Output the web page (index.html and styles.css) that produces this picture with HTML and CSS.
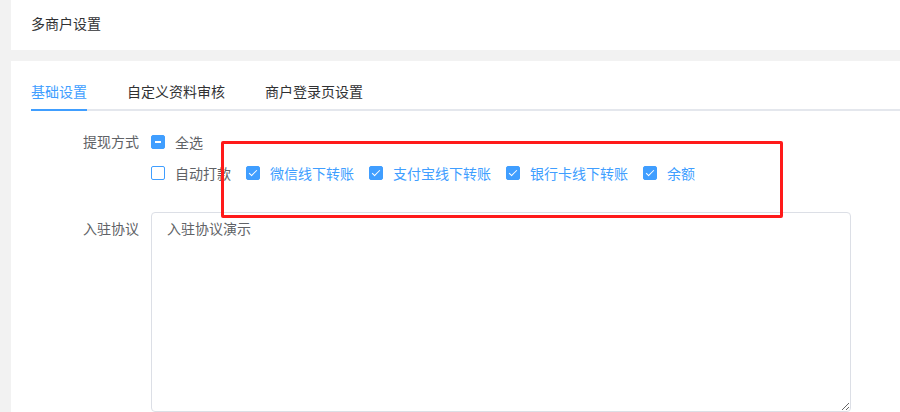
FILE: index.html
```html
<!DOCTYPE html>
<html>
<head>
	<meta charset="utf-8">
	<title>多商户设置</title>
	<link rel="stylesheet" href="styles.css">
</head>
<body>
<div class="page">
	<div class="head-card">
		<div class="head-title">多商户设置</div>
	</div>
	<div class="main-card">
		<div class="tabs">
			<div class="tab active">基础设置</div>
			<div class="tab">自定义资料审核</div>
			<div class="tab">商户登录页设置</div>
		</div>
		<form class="form">
			<div class="form-item">
				<label class="form-label">提现方式</label>
				<div class="form-content">
					<div class="check-row">
						<label class="check"><span class="box indeterminate"></span><span class="check-text">全选</span></label>
					</div>
					<div class="check-row">
						<label class="check"><span class="box"></span><span class="check-text">自动打款</span></label>
						<label class="check checked"><span class="box"></span><span class="check-text">微信线下转账</span></label>
						<label class="check checked"><span class="box"></span><span class="check-text">支付宝线下转账</span></label>
						<label class="check checked"><span class="box"></span><span class="check-text">银行卡线下转账</span></label>
						<label class="check checked"><span class="box"></span><span class="check-text">余额</span></label>
					</div>
				</div>
			</div>
			<div class="form-item">
				<label class="form-label">入驻协议</label>
				<div class="form-content">
					<textarea class="textarea">入驻协议演示</textarea>
				</div>
			</div>
		</form>
	</div>
</div>
<div class="mark"></div>
</body>
</html>
```

FILE: styles.css
```css
* { box-sizing: border-box; }
body { margin: 0; background: #f2f2f2; font-family: "Noto Sans CJK SC", "Microsoft YaHei", sans-serif; font-size: 14px; color: #303133; overflow: hidden; }
.page { padding-left: 11px; height: 412px; overflow: hidden; }
.head-card { background: #fff; height: 50px; padding: 14px 20px 0; }
.head-title { line-height: 18px; color: #303133; }
.main-card { background: #fff; margin-top: 11px; padding-left: 20px; height: 351px; }
.tabs { display: flex; gap: 40px; padding-top: 12px; border-bottom: 2px solid #e4e7ed; }
.tab { height: 36px; line-height: 36px; color: #303133; }
.tab.active { color: #409eff; border-bottom: 2px solid #409eff; height: 38px; margin-bottom: -2px; }
.form { padding-top: 15px; }
.form-item { display: flex; margin-bottom: 24px; }
.form-label { width: 120px; padding-right: 12px; text-align: right; color: #606266; line-height: 31px; flex-shrink: 0; }
.form-item + .form-item .form-label { line-height: 32px; }
.check-row { display: flex; height: 31px; align-items: center; }
.check { display: flex; align-items: center; margin-right: 15px; color: #606266; }
.check-text { padding-left: 10px; line-height: 20px; }
.check.checked .check-text { color: #409eff; }
.box { position: relative; width: 14px; height: 14px; border: 1px solid #409eff; border-radius: 2px; background: #fff; }
.box.indeterminate { background: #409eff; }
.box.indeterminate::after { content: ""; position: absolute; left: 3px; right: 3px; top: 5px; height: 2px; background: #fff; }
.check.checked .box { background: #409eff; }
.check.checked .box::after { content: ""; position: absolute; left: 4px; top: 1px; width: 3px; height: 7px; border: 1px solid #fff; border-top: 0; border-left: 0; transform: rotate(45deg); }
.textarea { display: block; width: 700px; height: 200px; padding: 5px 15px; border: 1px solid #dcdfe6; border-radius: 4px; font-family: inherit; font-size: 14px; line-height: 1.5; color: #606266; resize: vertical; }
.mark { position: absolute; left: 221px; top: 141px; width: 562px; height: 77px; border: 3px solid #ff1a1a; border-radius: 2px; }
```
